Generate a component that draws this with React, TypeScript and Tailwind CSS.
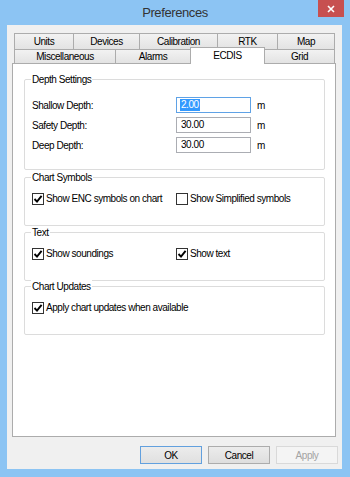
import React from "react";

const F = "font-['Liberation_Sans',Arial,sans-serif]";

function Check({ checked }: { checked: boolean }) {
  return (
    <span className="w-[12px] h-[12px] border border-[#333333] bg-white flex items-center justify-center shrink-0">
      {checked && (
        <svg width="10" height="10" viewBox="0 0 10 10">
          <path d="M1.5 5 L4 7.6 L8.6 1.8" fill="none" stroke="#000" strokeWidth="1.9" />
        </svg>
      )}
    </span>
  );
}

function CheckItem({ checked, label, w }: { checked: boolean; label: string; w?: string }) {
  return (
    <div className={`flex items-center gap-[2px] h-[13px] ${w ?? ""}`}>
      <Check checked={checked} />
      <span className="leading-[13px] whitespace-nowrap">{label}</span>
    </div>
  );
}

function Group({ title, h, mt, children }: { title: string; h: string; mt: string; children: React.ReactNode }) {
  return (
    <div className={`border border-[#dcdcdc] rounded-[2px] w-[301px] ${h} ${mt} flex flex-col`}>
      <div className="-mt-[7px] ml-[6px] px-[1px] bg-white w-fit leading-[13px] h-[13px] whitespace-nowrap">{title}</div>
      {children}
    </div>
  );
}

function DepthRow({ label, value, focused }: { label: string; value: string; focused?: boolean }) {
  return (
    <div className="flex items-center h-[16px] pl-[7px]">
      <span className="w-[144px] leading-[13px]">{label}</span>
      <div
        className={`w-[75px] h-[16px] bg-white border flex items-center pl-[3px] ${
          focused ? "border-[#5fa2e6]" : "border-[#abadb3]"
        }`}
      >
        {focused ? (
          <span className="bg-[#3399ff] text-white leading-[12px] px-[1px]">{value}</span>
        ) : (
          <span className="leading-[12px] px-[1px]">{value}</span>
        )}
      </div>
      <span className="ml-[6px]">m</span>
    </div>
  );
}

export default function App() {
  const tabBase =
    "h-full flex items-center justify-center border-t border-l border-[#acacac] bg-gradient-to-b from-[#f2f2f2] to-[#e3e3e3] whitespace-nowrap";
  return (
    <div className={`w-[350px] h-[477px] bg-[#8cc4f3] flex flex-col ${F} text-[10px] tracking-[-0.45px] text-black`}>
      {/* title bar */}
      <div className="h-[25px] flex shrink-0">
        <div className="w-[32px]" />
        <div className="flex-1 text-center text-[13px] tracking-[-0.4px] leading-[26px] text-[#333333]">Preferences</div>
        <div className="w-[26px] h-[17px] bg-[#c75050] flex items-center justify-center">
          <svg width="8" height="8" viewBox="0 0 8 8">
            <path d="M1 1 L7 7 M7 1 L1 7" stroke="#fff" strokeWidth="1.6" />
          </svg>
        </div>
        <div className="w-[6px]" />
      </div>

      {/* client area */}
      <div className="flex-1 ml-[7px] mr-[8px] mb-[8px] bg-[#f0f0f0] flex flex-col pt-[8px] pl-[5px] pr-[4px] pb-[5px]">
        {/* tab row 1 */}
        <div className="flex h-[16px] pl-[2px] shrink-0">
          <div className={`${tabBase} w-[59px]`}>Units</div>
          <div className={`${tabBase} w-[66px]`}>Devices</div>
          <div className={`${tabBase} w-[78px]`}>Calibration</div>
          <div className={`${tabBase} w-[60px]`}>RTK</div>
          <div className={`${tabBase} w-[58px] border-r`}>Map</div>
        </div>
        {/* tab row 2 */}
        <div className="flex items-end h-[14px] pl-[2px] shrink-0">
          <div className={`${tabBase} w-[101px]`}>Miscellaneous</div>
          <div className={`${tabBase} w-[75px]`}>Alarms</div>
          <div className="relative z-10 w-[75px] h-[17px] -mb-px bg-white border-t border-l border-r border-[#acacac] flex items-start justify-center pt-[2px] leading-[12px]">
            ECDIS
          </div>
          <div className={`${tabBase} w-[70px] border-r border-l-0`}>Grid</div>
        </div>

        {/* panel */}
        <div className="flex-1 mr-[2px] bg-white border border-[#acacac] flex flex-col pl-[11px] pt-[15px]">
          <Group title="Depth Settings" h="h-[91px]" mt="mt-0">
            <div className="flex flex-col gap-[4px] mt-[11px]">
              <DepthRow label="Shallow Depth:" value="2.00" focused />
              <DepthRow label="Safety Depth:" value="30.00" />
              <DepthRow label="Deep Depth:" value="30.00" />
            </div>
          </Group>
          <Group title="Chart Symbols" h="h-[49px]" mt="mt-[7px]">
            <div className="flex pl-[7px] mt-[8px]">
              <CheckItem checked label="Show ENC symbols on chart" w="w-[144px]" />
              <CheckItem checked={false} label="Show Simplified symbols" />
            </div>
          </Group>
          <Group title="Text" h="h-[49px]" mt="mt-[6px]">
            <div className="flex pl-[7px] mt-[8px]">
              <CheckItem checked label="Show soundings" w="w-[144px]" />
              <CheckItem checked label="Show text" />
            </div>
          </Group>
          <Group title="Chart Updates" h="h-[49px]" mt="mt-[5px]">
            <div className="flex pl-[7px] mt-[8px]">
              <CheckItem checked label="Apply chart updates when available" />
            </div>
          </Group>
        </div>

        {/* buttons */}
        <div className="flex justify-end gap-[6px] mt-[9px] h-[18px] shrink-0">
          <div className="w-[62px] h-[18px] border border-[#62a0de] bg-gradient-to-b from-[#ececec] to-[#e0e0e0] flex items-center justify-center">OK</div>
          <div className="w-[62px] h-[18px] border border-[#acacac] bg-gradient-to-b from-[#ececec] to-[#dedede] flex items-center justify-center">Cancel</div>
          <div className="w-[62px] h-[18px] border border-[#d9d9d9] bg-[#f4f4f4] text-[#a3a3a3] flex items-center justify-center">Apply</div>
        </div>
      </div>
    </div>
  );
}
